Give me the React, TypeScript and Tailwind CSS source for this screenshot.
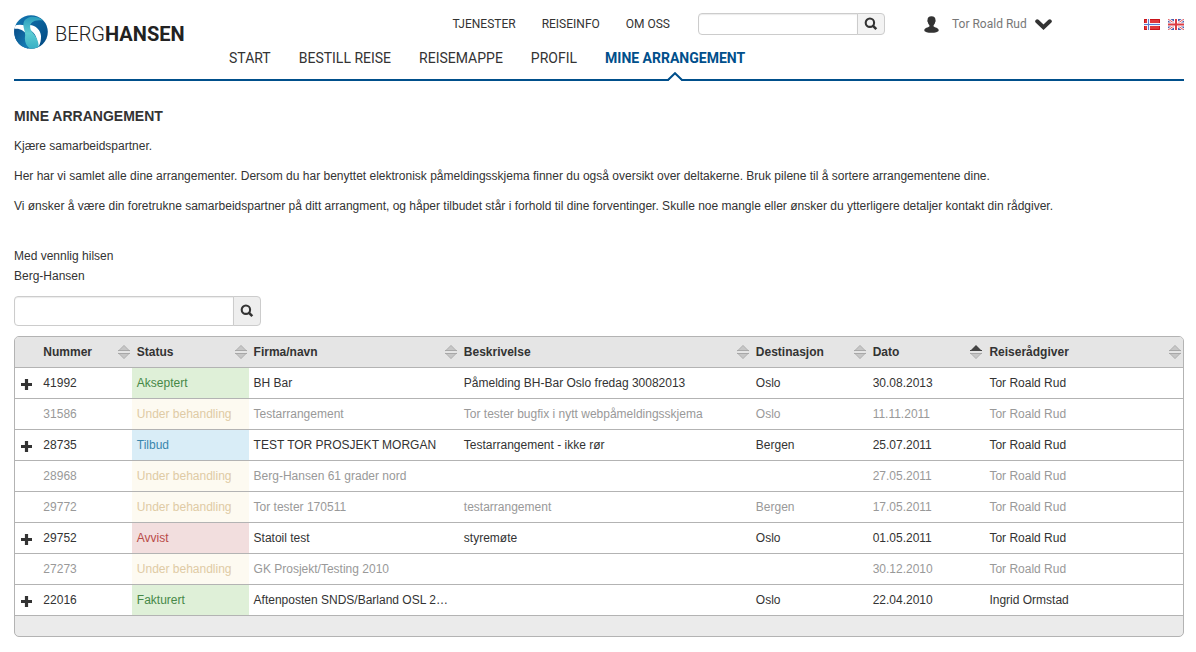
import clsx from 'clsx';

type Status =
  | 'Akseptert'
  | 'Under behandling'
  | 'Tilbud'
  | 'Avvist'
  | 'Fakturert';

interface Arrangement {
  number: string;
  status: Status;
  company: string;
  description: string;
  destination: string;
  date: string;
  advisor: string;
}

const arrangements: Arrangement[] = [
  {
    number: '41992',
    status: 'Akseptert',
    company: 'BH Bar',
    description: 'Påmelding BH-Bar Oslo fredag 30082013',
    destination: 'Oslo',
    date: '30.08.2013',
    advisor: 'Tor Roald Rud',
  },
  {
    number: '31586',
    status: 'Under behandling',
    company: 'Testarrangement',
    description: 'Tor tester bugfix i nytt webpåmeldingsskjema',
    destination: 'Oslo',
    date: '11.11.2011',
    advisor: 'Tor Roald Rud',
  },
  {
    number: '28735',
    status: 'Tilbud',
    company: 'TEST TOR PROSJEKT MORGAN',
    description: 'Testarrangement - ikke rør',
    destination: 'Bergen',
    date: '25.07.2011',
    advisor: 'Tor Roald Rud',
  },
  {
    number: '28968',
    status: 'Under behandling',
    company: 'Berg-Hansen 61 grader nord',
    description: '',
    destination: '',
    date: '27.05.2011',
    advisor: 'Tor Roald Rud',
  },
  {
    number: '29772',
    status: 'Under behandling',
    company: 'Tor tester 170511',
    description: 'testarrangement',
    destination: 'Bergen',
    date: '17.05.2011',
    advisor: 'Tor Roald Rud',
  },
  {
    number: '29752',
    status: 'Avvist',
    company: 'Statoil test',
    description: 'styremøte',
    destination: 'Oslo',
    date: '01.05.2011',
    advisor: 'Tor Roald Rud',
  },
  {
    number: '27273',
    status: 'Under behandling',
    company: 'GK Prosjekt/Testing 2010',
    description: '',
    destination: '',
    date: '30.12.2010',
    advisor: 'Tor Roald Rud',
  },
  {
    number: '22016',
    status: 'Fakturert',
    company: 'Aftenposten SNDS/Barland OSL 2…',
    description: '',
    destination: 'Oslo',
    date: '22.04.2010',
    advisor: 'Ingrid Ormstad',
  },
];

const statusStyles: Record<Status, string> = {
  Akseptert: 'bg-[#dff0d8] text-[#468847]',
  Fakturert: 'bg-[#dff0d8] text-[#468847]',
  'Under behandling': 'bg-[#fdfaf1] text-[#dfcba5]',
  Tilbud: 'bg-[#d9edf7] text-[#3a87ad]',
  Avvist: 'bg-[#f2dede] text-[#b94a48]',
};

const columns = [
  { title: 'Nummer', width: 'w-[8%]' },
  { title: 'Status', width: 'w-[10%]' },
  { title: 'Firma/navn', width: 'w-[18%]' },
  { title: 'Beskrivelse', width: 'w-[25%]' },
  { title: 'Destinasjon', width: 'w-[10%]' },
  { title: 'Dato', width: 'w-[10%]', sorted: true },
  { title: 'Reiserådgiver', width: 'w-[17%]' },
];

const topLinks = ['TJENESTER', 'REISEINFO', 'OM OSS'];
const mainLinks = [
  'START',
  'BESTILL REISE',
  'REISEMAPPE',
  'PROFIL',
  'MINE ARRANGEMENT',
];

const Globe = () => (
  <svg viewBox="0 0 34 34" className="h-[34px] w-[34px]" aria-hidden="true">
    <defs>
      <linearGradient id="globe-blue" x1="0" y1="0" x2="1" y2="1">
        <stop offset="0" stopColor="#1479b4" />
        <stop offset="1" stopColor="#00467f" />
      </linearGradient>
      <linearGradient id="globe-left" x1="0" y1="0" x2="1" y2="1">
        <stop offset="0" stopColor="#0a4c87" />
        <stop offset="1" stopColor="#1583bb" />
      </linearGradient>
      <linearGradient id="globe-teal" x1="0" y1="0" x2="0" y2="1">
        <stop offset="0" stopColor="#2a9dbd" />
        <stop offset="0.5" stopColor="#5ccbd2" />
        <stop offset="1" stopColor="#35adc4" />
      </linearGradient>
      <clipPath id="globe-clip">
        <circle cx="17" cy="17" r="16.8" />
      </clipPath>
    </defs>
    <g clipPath="url(#globe-clip)">
      <rect width="34" height="34" fill="url(#globe-blue)" />
      <path d="M0 13C4 13.5 9 14 11.5 19L14 34H0Z" fill="url(#globe-left)" />
      <path d="M0 11C3 9.6 7 9.4 11 10.5L13 20C10.5 15.5 5 12.8 0 14Z" fill="#fff" />
      <path d="M15.5 10C22 10.5 26.5 15 27 21C27.1 25 26.4 28 25 31L22.5 32C24.5 24 21 17 15.5 15Z" fill="#fff" />
      <path
        d="M29 5.5C22 -0.5 12 1.5 9.8 7C8.2 13 12 16 11 22C10.4 27 12.5 31 17 35L24.5 33C25.5 25 20.5 20 17.5 16C14 10.5 17 3.5 29 5.5Z"
        fill="url(#globe-teal)"
      />
    </g>
  </svg>
);

const SearchIcon = () => (
  <svg viewBox="0 0 14 14" className="h-[14px] w-[14px]" aria-hidden="true">
    <circle cx="5.9" cy="5.7" r="4.2" fill="none" stroke="#333" strokeWidth="2.1" />
    <path d="M8.8 8.6L12.3 12.1" stroke="#333" strokeWidth="2.6" />
  </svg>
);

const UserIcon = () => (
  <svg viewBox="0 0 15 17" className="h-[17px] w-[15px]" aria-hidden="true">
    <path
      d="M7.5 0.3C10.2 0.3 11.6 1.8 11.5 4.2C11.8 4.4 11.7 5.6 11.2 6C11 7.5 10.3 8.5 9.6 9.2V10.6C11 11.6 14.4 11.9 14.7 14.2C14.6 16 11 16.8 7.5 16.8S0.4 16 0.3 14.2C0.6 11.9 4 11.6 5.4 10.6V9.2C4.7 8.5 4 7.5 3.8 6C3.3 5.6 3.2 4.4 3.5 4.2C3.4 1.8 4.8 0.3 7.5 0.3Z"
      fill="#333"
    />
  </svg>
);

const ChevronIcon = () => (
  <svg viewBox="0 0 17 11" className="h-[11px] w-[17px]" aria-hidden="true">
    <path
      d="M2.2 2.3L8.5 8.2L14.8 2.3"
      fill="none"
      stroke="#333"
      strokeWidth="4"
      strokeLinecap="round"
    />
  </svg>
);

const PlusIcon = () => (
  <svg viewBox="0 0 11 11" className="h-[11px] w-[11px]" aria-hidden="true">
    <path d="M3.9 0H7.1V3.9H11V7.1H7.1V11H3.9V7.1H0V3.9H3.9Z" fill="#333" />
  </svg>
);

const SortIcon = ({ sorted }: { sorted?: boolean }) => (
  <svg viewBox="0 0 12 14" className="h-[14px] w-[12px] shrink-0" aria-hidden="true">
    <path d="M6 0L12 6H0Z" fill={sorted ? '#444' : '#c6c6c6'} />
    {!sorted && (
      <path d="M0.8 5.6L6 0.5L11.2 5.6" fill="none" stroke="#b0b0b0" strokeWidth="0.8" />
    )}
    <path d="M0 5H12V6H0Z" fill={sorted ? '#444' : '#a8a8a8'} />
    <path d="M0 8H12L6 14Z" fill="#c6c6c6" />
    <path d="M0.8 8.4L6 13.5L11.2 8.4" fill="none" stroke="#b0b0b0" strokeWidth="0.8" />
    <path d="M0 8H12V9H0Z" fill="#a8a8a8" />
  </svg>
);

const NorwegianFlag = () => (
  <svg viewBox="0 0 16 11" className="h-[11px] w-[16px]" aria-hidden="true">
    <rect width="16" height="11" fill="#e0383a" />
    <path d="M0.5 0.5H15.5V10.5H0.5Z" fill="none" stroke="#c8141a" />
    <path d="M4.5 0V11M0 5.5H16" stroke="#f4f4fa" strokeWidth="3" />
    <path d="M4.5 0V11M0 5.5H16" stroke="#5b7fd0" strokeWidth="1" />
  </svg>
);

const BritishFlag = () => (
  <svg viewBox="0 0 16 11" className="h-[11px] w-[16px]" aria-hidden="true">
    <rect width="16" height="11" fill="#4c5eac" />
    <path d="M0 0L16 11M16 0L0 11" stroke="#fff" strokeWidth="2.6" />
    <path d="M0 0L16 11M16 0L0 11" stroke="#e0555c" strokeWidth="1" />
    <path d="M8 0V11M0 5.5H16" stroke="#fff" strokeWidth="4" />
    <path d="M8 0V11M0 5.5H16" stroke="#dc3d45" strokeWidth="2" />
  </svg>
);

const Header = () => (
  <header className="flex h-[81px] border-b-2 border-[#004f8b] font-[Roboto,sans-serif] text-[#333]">
    <a href="#" className="mt-[15px] flex h-[34px] w-[215px] shrink-0 items-end">
      <Globe />
      <span className="ml-[7px] text-[20px] leading-[30px] text-[#222]">
        <span className="font-light">BERG</span>
        <span className="font-bold">HANSEN</span>
      </span>
    </a>
    <div className="flex grow flex-col">
      <div className="mt-[13px] flex h-[22px] items-center">
        <nav className="flex w-[441px] justify-end gap-[26px] text-[12px]">
          {topLinks.map((link) => (
            <a key={link} href="#">
              {link}
            </a>
          ))}
        </nav>
        <form className="ml-[28px] flex h-[22px] w-[187px]">
          <input
            type="text"
            aria-label="Søk"
            className="w-[160px] rounded-l-[4px] border border-[#ccc] bg-white px-1 text-[12px] shadow-[inset_0_1px_1px_rgba(0,0,0,0.08)]"
          />
          <button
            type="button"
            aria-label="Søk"
            className="-ml-px flex grow items-center justify-center rounded-r-[4px] border border-[#ccc] bg-[#f3f3f3]"
          >
            <SearchIcon />
          </button>
        </form>
        <button
          type="button"
          className="ml-[39px] flex items-center text-[12px] text-[#777]"
        >
          <UserIcon />
          <span className="mr-[8px] ml-[13px]">Tor Roald Rud</span>
          <ChevronIcon />
        </button>
        <div className="ml-auto flex gap-2">
          <a href="#" aria-label="Norsk">
            <NorwegianFlag />
          </a>
          <a href="#" aria-label="English">
            <BritishFlag />
          </a>
        </div>
      </div>
      <nav className="mt-[13px] flex gap-[28px] text-[14px] leading-[20px]">
        {mainLinks.map((link) => {
          const active = link === 'MINE ARRANGEMENT';
          return (
            <a
              key={link}
              href="#"
              className={clsx(
                'relative h-[33px]',
                active && 'font-bold text-[#004f8b]'
              )}
            >
              {link}
              {active && (
                <svg
                  viewBox="0 0 16 9"
                  className="absolute bottom-0 left-1/2 h-[9px] w-[16px] -translate-x-1/2"
                  aria-hidden="true"
                >
                  <path d="M1 9L8 2L15 9Z" fill="#fff" />
                  <path d="M0.5 8.5L8 1.2L15.5 8.5" fill="none" stroke="#004f8b" strokeWidth="2" />
                </svg>
              )}
            </a>
          );
        })}
      </nav>
    </div>
  </header>
);

const ArrangementTable = () => (
  <div className="mt-[10px] overflow-hidden rounded-[5px] border border-[#b3b3b3] bg-[#ebebeb] pb-[20px]">
    <table className="w-full table-fixed border-separate border-spacing-0 text-left">
      <thead>
        <tr className="bg-[#e5e5e5]">
          <th className="h-[31px] w-[2%] border-b border-[#b3b3b3] p-0" />
          {columns.map((column) => (
            <th
              key={column.title}
              className={clsx(
                'h-[31px] border-b border-[#b3b3b3] p-0',
                column.width
              )}
            >
              <button
                type="button"
                className="flex w-full items-center justify-between pr-[2px] pl-[5px] font-bold"
              >
                {column.title}
                <SortIcon sorted={column.sorted} />
              </button>
            </th>
          ))}
        </tr>
      </thead>
      <tbody>
        {arrangements.map((item) => {
          const inactive = item.status === 'Under behandling';
          const cell =
            'h-[31px] border-b border-[#b3b3b3] p-0 pl-[5px] whitespace-nowrap';
          return (
            <tr
              key={item.number}
              className={clsx('bg-white', inactive && 'text-[#999]')}
            >
              <td className="h-[31px] border-b border-[#b3b3b3] p-0">
                {!inactive && (
                  <button
                    type="button"
                    aria-label="Vis detaljer"
                    className="flex w-full justify-center pt-[3px]"
                  >
                    <PlusIcon />
                  </button>
                )}
              </td>
              <td className={cell}>{item.number}</td>
              <td className={clsx(cell, statusStyles[item.status])}>
                {item.status}
              </td>
              <td className={cell}>{item.company}</td>
              <td className={cell}>{item.description}</td>
              <td className={cell}>{item.destination}</td>
              <td className={cell}>{item.date}</td>
              <td className={cell}>{item.advisor}</td>
            </tr>
          );
        })}
      </tbody>
    </table>
  </div>
);

const App = () => {
  return (
    <div className="min-h-screen bg-white pr-[12px] pl-[14px] font-['Liberation_Sans',Arial,sans-serif] text-[12px] leading-[20px] text-[#333]">
      <Header />
      <main>
        <h1 className="mt-[25px] mb-[10px] text-[14px] leading-[20px] font-bold">
          MINE ARRANGEMENT
        </h1>
        <p className="mb-[10px]">Kjære samarbeidspartner.</p>
        <p className="mb-[10px]">
          Her har vi samlet alle dine arrangementer. Dersom du har benyttet
          elektronisk påmeldingsskjema finner du også oversikt over deltakerne.
          Bruk pilene til å sortere arrangementene dine.
        </p>
        <p className="mb-[30px]">
          Vi ønsker å være din foretrukne samarbeidspartner på ditt arrangment,
          og håper tilbudet står i forhold til dine forventinger. Skulle noe
          mangle eller ønsker du ytterligere detaljer kontakt din rådgiver.
        </p>
        <p className="mb-[10px]">
          Med vennlig hilsen
          <br />
          Berg-Hansen
        </p>
        <form className="flex h-[30px] w-[247px]">
          <input
            type="text"
            aria-label="Søk i arrangementer"
            className="w-[220px] rounded-l-[4px] border border-[#ccc] bg-white px-2 shadow-[inset_0_1px_1px_rgba(0,0,0,0.08)]"
          />
          <button
            type="button"
            aria-label="Søk i arrangementer"
            className="-ml-px flex grow items-center justify-center rounded-r-[4px] border border-[#ccc] bg-[#eee]"
          >
            <SearchIcon />
          </button>
        </form>
        <ArrangementTable />
      </main>
    </div>
  );
};

export default App;
